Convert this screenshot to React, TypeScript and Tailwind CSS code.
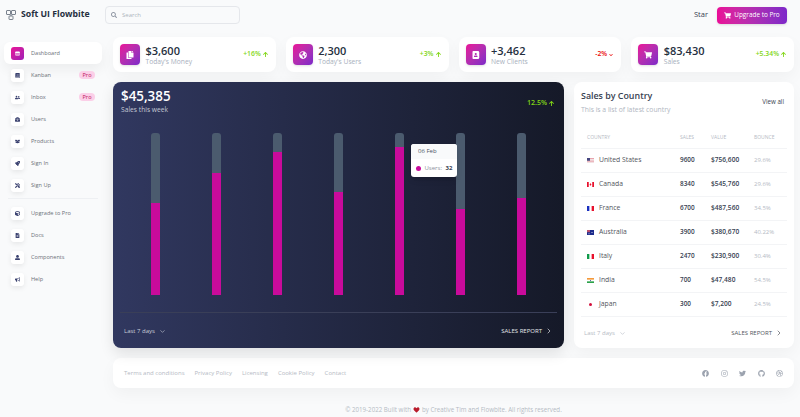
import React from 'react';
import {
  FaAddressBook, FaArrowUp, FaBook, FaBriefcase, FaChevronDown, FaCopy, FaCube, FaDribbble, FaFacebook, FaFileAlt, FaGithub,
  FaGlobeAmericas, FaHeart, FaInstagram, FaRocket, FaSearch, FaShoppingCart, FaStore, FaTools, FaTwitter, FaUserAlt,
  FaUserFriends, FaBullhorn, FaBoxOpen,
} from 'react-icons/fa';
import { ChevronDown, ChevronRight } from 'lucide-react';

const mainNav = [
  { label: 'Dashboard', icon: FaStore, active: true },
  { label: 'Kanban', icon: FaBook, pro: true },
  { label: 'Inbox', icon: FaUserFriends, pro: true },
  { label: 'Users', icon: FaBriefcase },
  { label: 'Products', icon: FaBoxOpen },
  { label: 'Sign In', icon: FaRocket },
  { label: 'Sign Up', icon: FaTools },
];

const extraNav = [
  { label: 'Upgrade to Pro', icon: FaCube },
  { label: 'Docs', icon: FaFileAlt },
  { label: 'Components', icon: FaUserAlt },
  { label: 'Help', icon: FaBullhorn },
];

const stats = [
  { value: '$3,600', label: "Today's Money", change: '+16%', up: true, icon: FaCopy },
  { value: '2,300', label: "Today's Users", change: '+3%', up: true, icon: FaGlobeAmericas },
  { value: '+3,462', label: 'New Clients', change: '-2%', up: false, icon: FaAddressBook },
  { value: '$83,430', label: 'Sales', change: '+5.34%', up: true, icon: FaShoppingCart },
];

// height of the magenta part inside the 162px track
const bars = [92, 122, 143, 103, 148, 86, 97];

const Flag = ({ code }: { code: string }) => {
  if (code === 'us') {
    return (
      <svg viewBox="0 0 14 10" className="w-[7px] h-[5px]">
        <rect width="14" height="10" fill="#e8a3ad" />
        <rect y="2" width="14" height="1.5" fill="#f5f5f5" />
        <rect y="5" width="14" height="1.5" fill="#f5f5f5" />
        <rect y="8" width="14" height="1.5" fill="#f5f5f5" />
        <rect width="6" height="5.5" fill="#46467f" />
      </svg>
    );
  }
  if (code === 'ca') {
    return (
      <svg viewBox="0 0 14 10" className="w-[7px] h-[5px]">
        <rect width="14" height="10" fill="#fff" />
        <rect width="3.5" height="10" fill="#e8112d" />
        <rect x="10.5" width="3.5" height="10" fill="#e8112d" />
        <path d="M7 2 L8.5 5 L8 7 H6 L5.5 5 Z" fill="#e8112d" />
      </svg>
    );
  }
  if (code === 'fr') {
    return (
      <svg viewBox="0 0 14 10" className="w-[7px] h-[5px]">
        <rect width="14" height="10" fill="#fff" />
        <rect width="4.7" height="10" fill="#1a2fbf" />
        <rect x="9.3" width="4.7" height="10" fill="#e8112d" />
      </svg>
    );
  }
  if (code === 'au') {
    return (
      <svg viewBox="0 0 14 10" className="w-[7px] h-[5px]">
        <rect width="14" height="10" fill="#1c2a8c" />
        <rect width="6" height="4.5" fill="#b9506f" />
        <circle cx="10" cy="5" r="1" fill="#fff" />
        <circle cx="4" cy="7.5" r="1" fill="#fff" />
      </svg>
    );
  }
  if (code === 'it') {
    return (
      <svg viewBox="0 0 14 10" className="w-[7px] h-[5px]">
        <rect width="14" height="10" fill="#fff" />
        <rect width="4.7" height="10" fill="#0f9b4a" />
        <rect x="9.3" width="4.7" height="10" fill="#e8112d" />
      </svg>
    );
  }
  if (code === 'in') {
    return (
      <svg viewBox="0 0 14 10" className="w-[7px] h-[5px]">
        <rect width="14" height="10" fill="#fff" />
        <rect width="14" height="3.3" fill="#f59a3c" />
        <rect y="6.7" width="14" height="3.3" fill="#2ca24b" />
        <circle cx="7" cy="5" r="1" fill="#34348f" />
      </svg>
    );
  }
  return (
    <svg viewBox="0 0 14 10" className="w-[7px] h-[5px]">
      <rect width="14" height="10" fill="#fff" />
      <circle cx="7" cy="5" r="3" fill="#d30f3c" />
    </svg>
  );
};

const countries = [
  { name: 'United States', flag: 'us', sales: '9600', value: '$756,600', bounce: '29.6%' },
  { name: 'Canada', flag: 'ca', sales: '8340', value: '$545,760', bounce: '29.6%' },
  { name: 'France', flag: 'fr', sales: '6700', value: '$487,560', bounce: '34.5%' },
  { name: 'Australia', flag: 'au', sales: '3900', value: '$380,670', bounce: '40.22%' },
  { name: 'Italy', flag: 'it', sales: '2470', value: '$230,900', bounce: '30.4%' },
  { name: 'India', flag: 'in', sales: '700', value: '$47,480', bounce: '54.5%' },
  { name: 'Japan', flag: 'jp', sales: '300', value: '$7,200', bounce: '24.5%' },
];

const NavRow = ({ item }: { item: any }) => {
  const Icon = item.icon;
  return (
    <div className={`h-[22px] flex items-center pl-[7px] pr-[7px] rounded-md ${item.active ? 'bg-white shadow-[0_6px_12px_rgba(0,0,0,0.05)]' : ''}`}>
      <div className={`w-[13px] h-[13px] rounded-[3px] flex items-center justify-center ${item.active ? 'bg-linear-to-br from-[#ea0a97] to-[#a01bb5] text-white' : 'bg-white shadow-[0_2px_5px_rgba(0,0,0,0.08)] text-[#3a416f]'}`}>
        <Icon className="w-[5px] h-[5px]" />
      </div>
      <span className="ml-[7px] text-[5.6px] text-[#6b7078]">{item.label}</span>
      {item.pro && <span className="ml-auto w-[16px] h-[8px] rounded-full bg-[#fbcfe8] text-[#be185d] text-[5.6px] leading-[8px] text-center">Pro</span>}
    </div>
  );
};

const StatCard = ({ stat }: { stat: any }) => {
  const Icon = stat.icon;
  return (
    <div className="flex-1 h-[35px] bg-white rounded-lg shadow-[0_6px_16px_rgba(0,0,0,0.04)] flex items-center pl-[7px] pr-[8px]">
      <div className="w-[20px] h-[21px] rounded-[4px] bg-linear-to-br from-[#ea0a97] to-[#7d27c9] flex items-center justify-center text-white shadow-sm">
        <Icon className="w-[8px] h-[8px]" />
      </div>
      <div className="ml-[5.5px] flex flex-col">
        <span className="text-[11px] leading-[13px] font-semibold text-[#252f40]">{stat.value}</span>
        <span className="text-[6.7px] leading-[9px] text-[#a8b0bd]">{stat.label}</span>
      </div>
      <div className={`ml-auto flex items-center gap-[2px] text-[6.8px] font-semibold ${stat.up ? 'text-[#82d616]' : 'text-[#ea0606]'}`}>
        <span>{stat.change}</span>
        {stat.up ? <FaArrowUp className="w-[5px] h-[7px]" /> : <FaChevronDown className="w-[4px] h-[4px]" />}
      </div>
    </div>
  );
};

export default function App() {
  return (
    <div className="w-[800px] h-[417px] overflow-hidden bg-[#f9fafb] font-['Open_Sans',sans-serif] flex flex-col">
      {/* navbar */}
      <div className="h-[30px] shrink-0 flex items-center pl-[6px] pr-[13px]">
        <svg viewBox="0 0 20 20" className="w-[10px] h-[10px] text-[#5b6473]" fill="none" stroke="currentColor" strokeWidth="1.6">
          <rect x="1" y="1" width="8" height="8" rx="1" />
          <rect x="11" y="1" width="8" height="8" rx="1" />
          <rect x="6" y="12" width="8" height="7" rx="1" />
          <path d="M10 9v3" />
        </svg>
        <span className="ml-[5px] w-[68px] text-[8.7px] font-bold text-[#252f40] whitespace-nowrap">Soft UI Flowbite</span>
        <div className="ml-[16px] w-[135px] h-[18px] border border-[#e5e7eb] rounded-[4px] flex items-center pl-[5px] text-[#9ca3af]">
          <FaSearch className="w-[6px] h-[6px] text-[#8f96a3]" />
          <span className="ml-[5px] text-[6px] text-[#adb5bd]">Search</span>
        </div>
        <span className="ml-auto text-[7.5px] font-medium text-[#374151]">Star</span>
        <button className="ml-[9px] w-[70px] h-[17px] rounded-[4px] bg-linear-to-r from-[#ea0a97] to-[#7d27c9] text-white flex items-center justify-center gap-[3px] text-[6.4px] shadow-sm">
          <FaShoppingCart className="w-[7px] h-[7px]" />
          Upgrade to Pro
        </button>
      </div>

      <div className="flex flex-1 min-h-0">
        {/* sidebar */}
        <div className="w-[98px] ml-[4px] shrink-0 pt-[12px]">
          {mainNav.map((item) => <NavRow key={item.label} item={item} />)}
          <div className="h-px bg-[#eef0f3] mx-[4px] my-[2px]" />
          <div className="pt-[1px]">
            {extraNav.map((item) => <NavRow key={item.label} item={item} />)}
          </div>
        </div>

        {/* main */}
        <div className="flex-1 min-w-0 ml-[11px] mr-[6px] pt-[7px] flex flex-col">
          <div className="flex gap-[10px]">
            {stats.map((s) => <StatCard key={s.label} stat={s} />)}
          </div>

          <div className="flex gap-[10px] mt-[10px]">
            {/* chart card */}
            <div className="relative w-[451px] h-[266px] rounded-lg bg-linear-to-r from-[#313860] to-[#151928] shadow-[0_6px_14px_rgba(0,0,0,0.1)] flex flex-col">
              <div className="flex justify-between pl-[8px] pr-[10px] pt-[5px]">
                <div className="flex flex-col">
                  <span className="text-[13.4px] leading-[18px] font-semibold text-white">$45,385</span>
                  <span className="text-[6.7px] leading-[9px] text-[#c3c8d4]">Sales this week</span>
                </div>
                <div className="flex items-center gap-[2px] h-[14px] mt-[9px] text-[7px] font-semibold text-[#82d616]">
                  12.5%
                  <FaArrowUp className="w-[5px] h-[7px]" />
                </div>
              </div>
              <div className="flex justify-between pl-[38px] pr-[38px] mt-[19px]">
                {bars.map((h, i) => (
                  <div key={i} className="w-[9px] h-[162px] bg-[#4b5b6e] rounded-t-[3px] flex flex-col justify-end">
                    <div className="w-full bg-[#c90b9b]" style={{ height: h }} />
                  </div>
                ))}
              </div>
              <div className="h-px bg-[#3a3f58] mx-[7px] mt-[17px]" />
              <div className="flex-1 flex items-center justify-between pl-[11px] pr-[11px] pt-[1px] text-[6px]">
                <span className="flex items-center gap-[3px] text-[#c9cdd8]">Last 7 days <ChevronDown className="w-[7px] h-[7px] ml-[1px]" /></span>
                <span className="flex items-center gap-[3px] text-[#e5e7eb]">SALES REPORT <ChevronRight className="w-[8px] h-[8px]" /></span>
              </div>

              {/* tooltip */}
              <div className="absolute left-[298px] top-[62px] w-[46px] h-[33px] rounded-[3px] bg-white shadow-md overflow-hidden">
                <div className="h-[15px] bg-[#f9fafb] flex items-center pl-[7px] text-[6px] text-[#4b5563]">06 Feb</div>
                <div className="h-[18px] flex items-center pl-[4.5px] text-[6px]">
                  <span className="w-[5px] h-[5px] rounded-full bg-[#c90b9b]" />
                  <span className="ml-[4px] text-[#8a909b]">Users:</span>
                  <span className="ml-[3.5px] font-bold text-[#374151]">32</span>
                </div>
              </div>
            </div>

            {/* sales by country */}
            <div className="w-[220px] h-[266px] rounded-lg bg-white shadow-[0_6px_16px_rgba(0,0,0,0.04)] px-[7px] flex flex-col">
              <div className="flex justify-between items-start pt-[7px]">
                <div className="flex flex-col">
                  <span className="text-[8.9px] leading-[13px] font-semibold text-[#374151]">Sales by Country</span>
                  <span className="text-[6.8px] leading-[10px] mt-[3px] text-[#b0b6c1]">This is a list of latest country</span>
                </div>
                <span className="text-[6.2px] mr-[3px] mt-[8px] text-[#374151]">View all</span>
              </div>
              <table className="w-full mt-[13px] table-fixed">
                <thead>
                  <tr className="h-[20px] text-[5px] text-[#b5bac4] border-b border-[#f3f4f6]">
                    <th className="w-[99px] text-left font-normal pl-[6px]">COUNTRY</th>
                    <th className="w-[31px] text-left font-normal">SALES</th>
                    <th className="w-[43px] text-left font-normal">VALUE</th>
                    <th className="text-left font-normal">BOUNCE</th>
                  </tr>
                </thead>
                <tbody>
                  {countries.map((c) => (
                    <tr key={c.name} className="h-[24px] border-b border-[#f3f4f6]">
                      <td className="pl-[6px]">
                        <span className="flex items-center gap-[5px] text-[6.8px] text-[#52555c]">
                          <Flag code={c.flag} />
                          {c.name}
                        </span>
                      </td>
                      <td className="text-[6.4px] font-semibold text-[#374151]">{c.sales}</td>
                      <td className="text-[6.6px] font-semibold text-[#374151]">{c.value}</td>
                      <td className="text-[6px] text-[#b5bac4]">{c.bounce}</td>
                    </tr>
                  ))}
                </tbody>
              </table>
              <div className="flex-1 flex items-center justify-between pl-[3px] pr-[4px] text-[6px] pt-[2px]">
                <span className="flex items-center gap-[3px] text-[#b5bac4]">Last 7 days <ChevronDown className="w-[7px] h-[7px] ml-[1px]" /></span>
                <span className="flex items-center gap-[3px] text-[#52555c]">SALES REPORT <ChevronRight className="w-[8px] h-[8px]" /></span>
              </div>
            </div>
          </div>

          {/* footer */}
          <div className="mt-[10px] h-[30px] shrink-0 bg-white rounded-lg shadow-[0_6px_16px_rgba(0,0,0,0.04)] flex items-center pl-[11px] pr-[11px] text-[6px] text-[#b5bac4]">
            <div className="flex gap-[10px]">
              <span>Terms and conditions</span>
              <span>Privacy Policy</span>
              <span>Licensing</span>
              <span>Cookie Policy</span>
              <span>Contact</span>
            </div>
            <div className="ml-auto flex gap-[11.5px] text-[#9ca3af]">
              <FaFacebook className="w-[7px] h-[7px]" />
              <FaInstagram className="w-[7px] h-[7px]" />
              <FaTwitter className="w-[7px] h-[7px]" />
              <FaGithub className="w-[7px] h-[7px]" />
              <FaDribbble className="w-[7px] h-[7px]" />
            </div>
          </div>

          <div className="mt-[17px] text-center text-[6.2px] leading-[9px] text-[#b5bac4] flex items-center justify-center gap-[2px]">
            © 2019-2022 Built with <FaHeart className="w-[7px] h-[6px] text-[#b91c2c]" /> by Creative Tim and Flowbite. All rights reserved.
          </div>
        </div>
      </div>
    </div>
  );
}
